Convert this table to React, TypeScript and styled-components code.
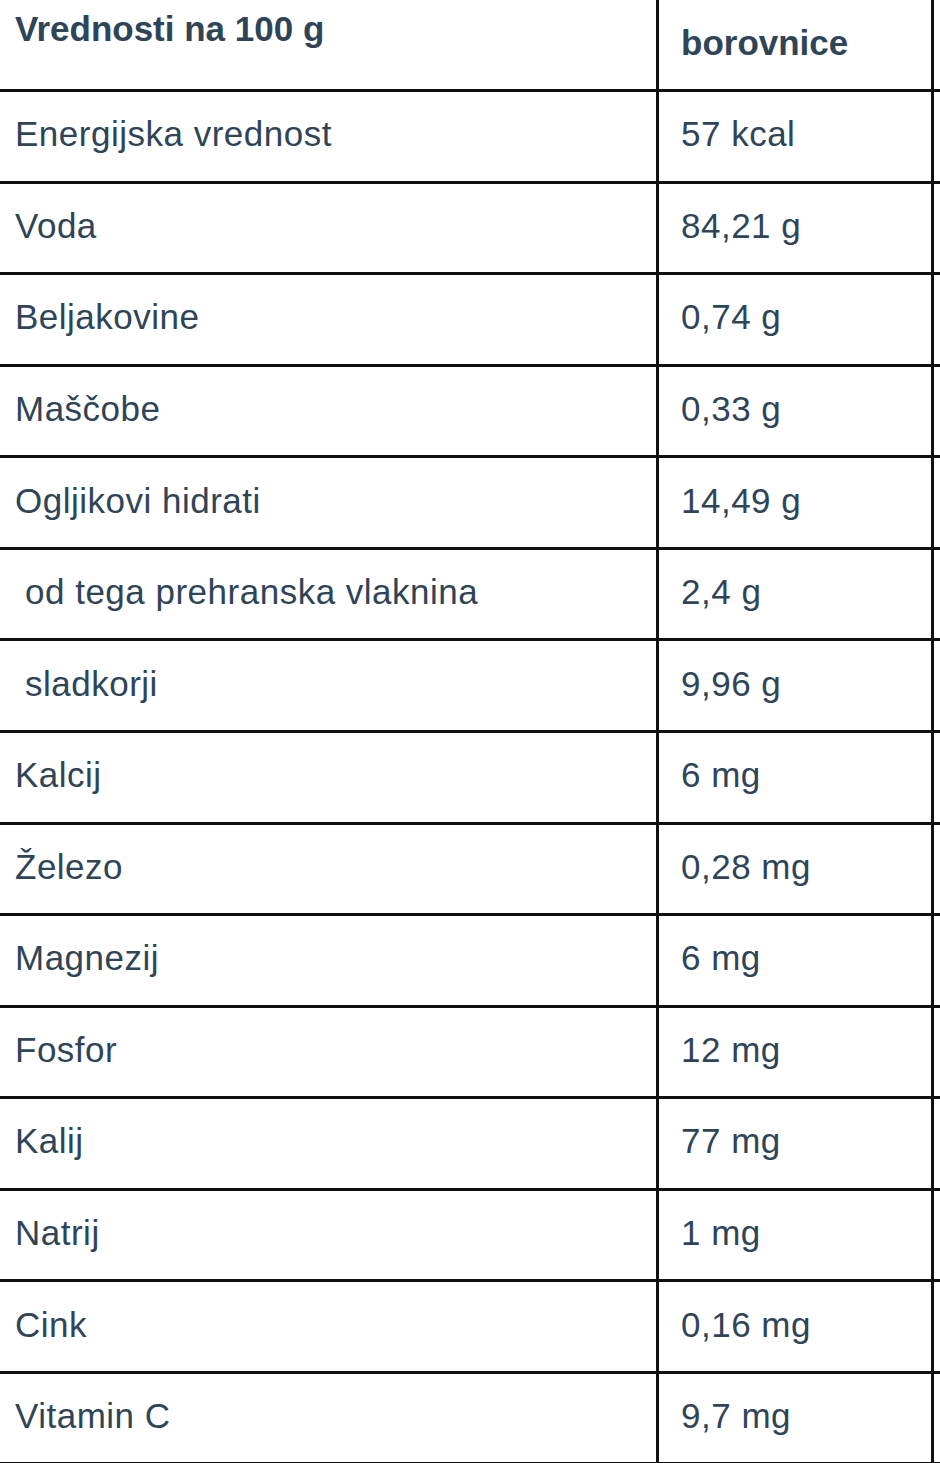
import React from "react";
import styled, { createGlobalStyle } from "styled-components";

const GlobalStyle = createGlobalStyle`
  html, body {
    margin: 0;
    padding: 0;
    background: #ffffff;
    overflow: hidden;
  }
  body {
    font-family: "Liberation Sans", Arial, sans-serif;
  }
`;

const Table = styled.table`
  border-collapse: separate;
  border-spacing: 0;
  table-layout: fixed;
  width: 940px;
  font-family: "Liberation Sans", Arial, sans-serif;
  font-size: 35px;
  letter-spacing: 0.5px;
  color: #2f4557;
`;

const Col = styled.col<{ $w: number }>`
  width: ${(p) => p.$w}px;
`;

const Cell = styled.td<{
  $first?: boolean;
  $indent?: boolean;
  $head?: boolean;
  $top?: boolean;
  $edge?: boolean;
}>`
  box-sizing: border-box;
  height: ${(p) => (p.$head ? 92 : 91.57)}px;
  border-right: ${(p) => (p.$edge ? "none" : "3px solid #111111")};
  border-bottom: 3px solid #111111;
  padding: ${(p) => (p.$top ? "9px" : "0")} 0 ${(p) => (p.$top ? "0" : "4px")}
    ${(p) => (p.$edge ? 0 : p.$first ? (p.$indent ? 25 : 15) : 22)}px;
  vertical-align: ${(p) => (p.$top ? "top" : "middle")};
  font-weight: ${(p) => (p.$head ? 700 : 400)};
  letter-spacing: ${(p) => (p.$head ? "0" : "0.5px")};
  text-align: left;
  white-space: nowrap;
  overflow: hidden;
`;

const rows: [string, string, boolean?][] = [
  ["Energijska vrednost", "57 kcal"],
  ["Voda", "84,21 g"],
  ["Beljakovine", "0,74 g"],
  ["Maščobe", "0,33 g"],
  ["Ogljikovi hidrati", "14,49 g"],
  ["od tega prehranska vlaknina", "2,4 g", true],
  ["sladkorji", "9,96 g", true],
  ["Kalcij", "6 mg"],
  ["Železo", "0,28 mg"],
  ["Magnezij", "6 mg"],
  ["Fosfor", "12 mg"],
  ["Kalij", "77 mg"],
  ["Natrij", "1 mg"],
  ["Cink", "0,16 mg"],
  ["Vitamin C", "9,7 mg"],
];

export default function App() {
  return (
    <>
      <GlobalStyle />
      <Table>
        <colgroup>
          <Col $w={659} />
          <Col $w={275} />
          <Col $w={6} />
        </colgroup>
        <thead>
          <tr>
            <Cell as="th" $first $head $top>
              Vrednosti na 100 g
            </Cell>
            <Cell as="th" $head>
              borovnice
            </Cell>
            <Cell as="th" $head $edge />
          </tr>
        </thead>
        <tbody>
          {rows.map(([name, value, indent]) => (
            <tr key={name}>
              <Cell $first $indent={!!indent}>
                {name}
              </Cell>
              <Cell>{value}</Cell>
              <Cell $edge />
            </tr>
          ))}
        </tbody>
      </Table>
    </>
  );
}
